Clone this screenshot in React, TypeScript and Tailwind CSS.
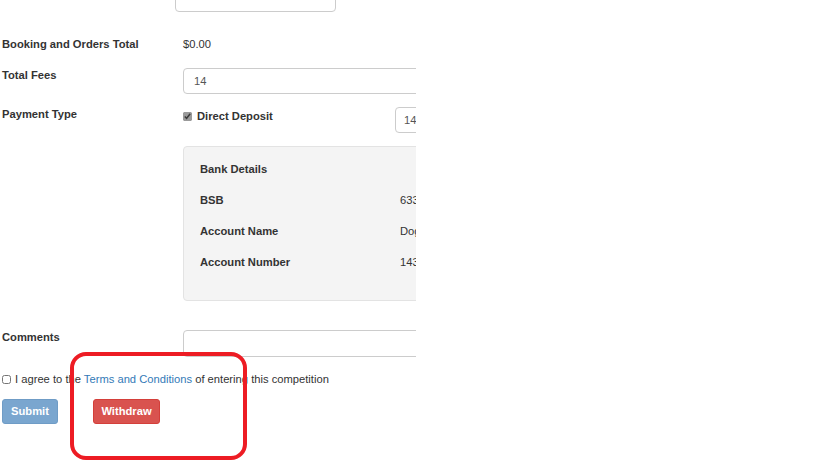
import React from 'react';

// Bank details shown inside the grey panel
const bankRows = [
  { label: 'BSB', value: '633-000' },
  { label: 'Account Name', value: 'Dogs Club' },
  { label: 'Account Number', value: '143 567 890' },
];

function App() {
  return (
    <div className="relative w-[819px] h-[460px] overflow-hidden bg-white text-[11.2px] text-[#333] font-['Liberation_Sans',Arial,sans-serif]">
      <div className="w-[416px] overflow-hidden">
        {/* input cut off at the top */}
        <div className="mt-[-14px] ml-[175px] w-[161px] h-[26px] border border-[#ccc] rounded-[4px]" />

        <div className="mt-[24px] flex leading-[16px]">
          <div className="w-[183px] shrink-0 pl-[2px] font-bold">Booking and Orders Total</div>
          <div>$0.00</div>
        </div>

        <div className="mt-[16px] flex items-start">
          <div className="w-[183px] shrink-0 pl-[2px] font-bold leading-[14px]">Total Fees</div>
          <div className="shrink-0 w-[320px] h-[26px] border border-[#ccc] rounded-[4px] pl-[10px] flex items-center text-[#555]">
            14
          </div>
        </div>

        <div className="mt-[13px] flex items-start">
          <div className="w-[183px] shrink-0 pl-[2px] font-bold leading-[14px]">Payment Type</div>
          <div className="flex items-start shrink-0">
            <div className="flex items-center gap-[5px] mt-[2px] w-[212px]">
              <input type="checkbox" defaultChecked className="w-[9px] h-[9px] m-0 accent-[#9a9a9a]" />
              <span className="font-bold leading-[14px]">Direct Deposit</span>
            </div>
            <div className="shrink-0 w-[120px] h-[26px] border border-[#ccc] rounded-[4px] pl-[8px] flex items-center text-[#555]">
              14
            </div>
          </div>
        </div>

        <div className="mt-[13px] ml-[183px] w-[320px] h-[155px] bg-[#f4f4f4] border border-[#e3e3e3] rounded-[4px] pt-[14px] pl-[16px]">
          <div className="font-bold leading-[16px] mb-[15px]">Bank Details</div>
          {bankRows.map((row) => (
            <div key={row.label} className="flex leading-[16px] mb-[15px]">
              <div className="w-[200px] shrink-0 font-bold">{row.label}</div>
              <div className="whitespace-nowrap">{row.value}</div>
            </div>
          ))}
        </div>

        <div className="mt-[29px] flex items-start">
          <div className="w-[183px] shrink-0 pl-[2px] font-bold leading-[14px]">Comments</div>
          <div className="shrink-0 w-[320px] h-[27px] border border-[#ccc] rounded-[4px]" />
        </div>

        <div className="mt-[14px] flex items-center gap-[4px] pl-[2px] leading-[16px] whitespace-nowrap">
          <input type="checkbox" className="w-[9px] h-[9px] m-0" />
          <span>
            I agree to the <span className="text-[#337ab7]">Terms and Conditions</span> of entering this competition
          </span>
        </div>

        <div className="mt-[12px] flex items-center pl-[2px] gap-[35px]">
          <button className="w-[56px] h-[25px] rounded-[3px] bg-[#7aa6cf] border border-[#6f9cc6] text-white font-bold">
            Submit
          </button>
          <button className="w-[67px] h-[25px] rounded-[3px] bg-[#d9534f] border border-[#d43f3a] text-white font-bold">
            Withdraw
          </button>
        </div>
      </div>

      {/* red annotation drawn on the screenshot */}
      <div className="absolute left-[70px] top-[352px] w-[177px] h-[108px] border-[4px] border-[#ed1c24] rounded-[16px]" />
    </div>
  );
}

export default App;
